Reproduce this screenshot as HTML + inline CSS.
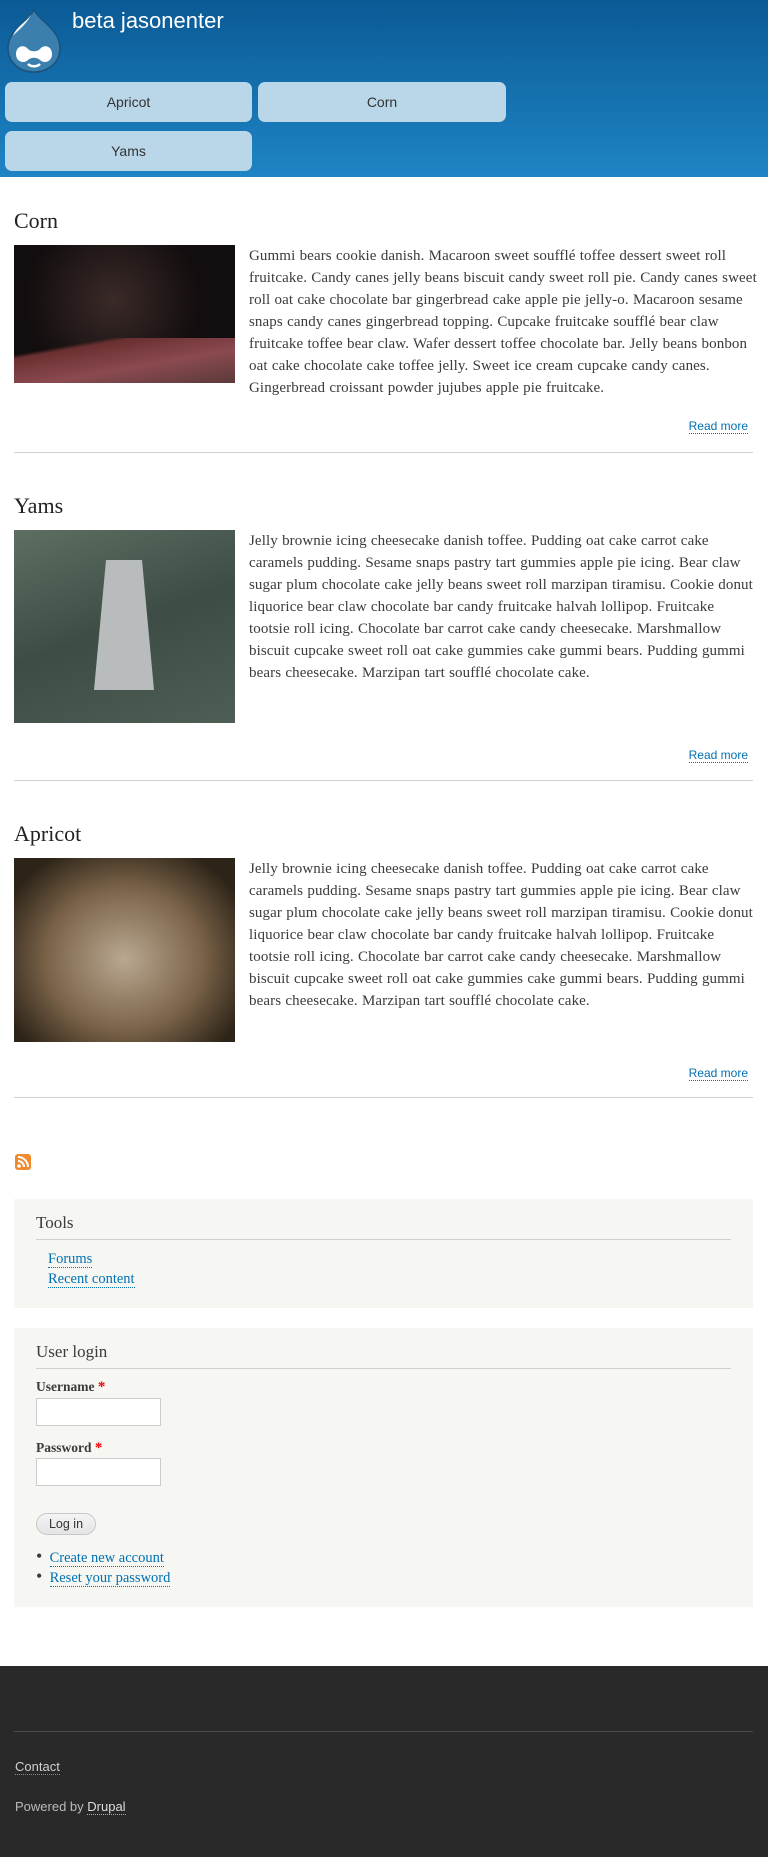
<!DOCTYPE html>
<html><head><meta charset="utf-8"><style>
*{margin:0;padding:0;box-sizing:border-box}
body{width:768px;height:1857px;background:#fff;font-family:"Liberation Serif",serif;color:#3b3b3b;position:relative;overflow:hidden}
.abs{position:absolute}
#hdr{left:0;top:0;width:768px;height:177px;background:linear-gradient(#0a5a95,#1f84c4)}
.site{left:72px;top:8px;font-family:"Liberation Sans",sans-serif;font-size:22px;color:#fff}
.nav{height:40px;background:#bad6e9;border-radius:7px;font-family:"Liberation Sans",sans-serif;font-size:14px;color:#333;text-align:center;line-height:40px}
h2{position:absolute;left:14px;font-weight:normal;font-size:22px;color:#222}
.txt{position:absolute;left:249px;width:505px;font-size:15px;letter-spacing:0.1px;word-spacing:0.4px;line-height:22px;color:#3b3b3b}
.rm{position:absolute;right:20px;font-family:"Liberation Sans",sans-serif;font-size:12px;color:#0071b3;border-bottom:1px dotted #0071b3;line-height:14px}
.hr{position:absolute;left:14px;width:739px;height:1px;background:#d0d0d0}
.box{position:absolute;left:14px;width:739px;background:#f6f6f2}
.bt{position:absolute;left:22px;right:22px;font-size:17px;color:#3b3b3b;border-bottom:1px solid #d0d0d0;padding-bottom:6px}
a{color:#0071b3;text-decoration:none;border-bottom:1px dotted #0071b3}
.lk{position:absolute;font-size:14.5px;line-height:17px}
.lbl{position:absolute;left:22px;font-weight:bold;font-size:13.5px;color:#3b3b3b}
.lbl span{color:#e00;font-size:15px}
.inp{position:absolute;left:22px;width:125px;height:28px;background:#fff;border:1px solid #ccc}
</style></head><body>
<div id="hdr" class="abs">
<svg class="abs" style="left:4px;top:6px" width="60" height="68" viewBox="0 0 60 68">
<path d="M30 2 C30 12 4 22 4 42 C4 57 16 66 30 66 C44 66 56 57 56 42 C56 22 30 12 30 2Z" fill="#3a7fae" stroke="#1b527b" stroke-width="1.5"/>
<path d="M28 6 C26 14 12 20 9 30 C14 24 24 18 28 6Z" fill="#e8f2f8"/>
<path d="M12 48 C12 40 20 38 24 43 C27 46 33 46 36 43 C40 38 48 40 48 48 C48 56 40 58 36 54 C33 51 27 51 24 54 C20 58 12 56 12 48Z" fill="#fff"/>
<path d="M24 58 C27 61 33 61 36 58" stroke="#fff" stroke-width="2.5" fill="none"/>
</svg>
<div class="abs site">beta jasonenter</div>
<div class="abs nav" style="left:5px;top:82px;width:247px">Apricot</div>
<div class="abs nav" style="left:258px;top:82px;width:248px">Corn</div>
<div class="abs nav" style="left:5px;top:131px;width:247px">Yams</div>
</div>

<h2 style="top:208px">Corn</h2>
<div class="abs" style="left:14px;top:245px;width:221px;height:138px;background:radial-gradient(circle at 45% 40%,#3a2a28,#120d0e 60%),#111"><div style="position:absolute;left:0;bottom:0;width:221px;height:45px;background:linear-gradient(170deg,transparent 20%,#6a2f30 25%,#8a4a50 60%,#5c3a3a)"></div></div>
<div class="txt" style="top:245px;width:514px">Gummi bears cookie danish. Macaroon sweet soufflé toffee dessert sweet roll fruitcake. Candy canes jelly beans biscuit candy sweet roll pie. Candy canes sweet roll oat cake chocolate bar gingerbread cake apple pie jelly-o. Macaroon sesame snaps candy canes gingerbread topping. Cupcake fruitcake soufflé bear claw fruitcake toffee bear claw. Wafer dessert toffee chocolate bar. Jelly beans bonbon oat cake chocolate cake toffee jelly. Sweet ice cream cupcake candy canes. Gingerbread croissant powder jujubes apple pie fruitcake.</div>
<div class="rm" style="top:419px">Read more</div>
<div class="hr" style="top:452px"></div>

<h2 style="top:493px">Yams</h2>
<div class="abs" style="left:14px;top:530px;width:221px;height:193px;background:linear-gradient(160deg,#5e6e62,#3d4d45 50%,#4f5e55)"><div style="position:absolute;left:80px;top:30px;width:60px;height:130px;background:#b8bcbc;clip-path:polygon(20% 0,80% 0,100% 100%,0 100%)"></div></div>
<div class="txt" style="top:530px">Jelly brownie icing cheesecake danish toffee. Pudding oat cake carrot cake caramels pudding. Sesame snaps pastry tart gummies apple pie icing. Bear claw sugar plum chocolate cake jelly beans sweet roll marzipan tiramisu. Cookie donut liquorice bear claw chocolate bar candy fruitcake halvah lollipop. Fruitcake tootsie roll icing. Chocolate bar carrot cake candy cheesecake. Marshmallow biscuit cupcake sweet roll oat cake gummies cake gummi bears. Pudding gummi bears cheesecake. Marzipan tart soufflé chocolate cake.</div>
<div class="rm" style="top:748px">Read more</div>
<div class="hr" style="top:780px"></div>

<h2 style="top:821px">Apricot</h2>
<div class="abs" style="left:14px;top:858px;width:221px;height:184px;background:radial-gradient(ellipse at 50% 55%,#b9a890,#7a6248 50%,#2c2418 85%)"></div>
<div class="txt" style="top:858px">Jelly brownie icing cheesecake danish toffee. Pudding oat cake carrot cake caramels pudding. Sesame snaps pastry tart gummies apple pie icing. Bear claw sugar plum chocolate cake jelly beans sweet roll marzipan tiramisu. Cookie donut liquorice bear claw chocolate bar candy fruitcake halvah lollipop. Fruitcake tootsie roll icing. Chocolate bar carrot cake candy cheesecake. Marshmallow biscuit cupcake sweet roll oat cake gummies cake gummi bears. Pudding gummi bears cheesecake. Marzipan tart soufflé chocolate cake.</div>
<div class="rm" style="top:1066px">Read more</div>
<div class="hr" style="top:1097px"></div>

<svg class="abs" style="left:15px;top:1154px" width="16" height="16" viewBox="0 0 16 16"><rect width="16" height="16" rx="3" fill="#f08a2c"/><circle cx="4" cy="12" r="1.8" fill="#fff"/><path d="M3 7a6 6 0 0 1 6 6M3 3a10 10 0 0 1 10 10" stroke="#fff" stroke-width="2" fill="none"/></svg>

<div class="box" style="top:1199px;height:109px">
<div class="bt" style="top:14px">Tools</div>
<div class="lk" style="left:34px;top:52px"><a>Forums</a></div>
<div class="lk" style="left:34px;top:72px"><a>Recent content</a></div>
</div>

<div class="box" style="top:1328px;height:279px">
<div class="bt" style="top:14px">User login</div>
<div class="lbl" style="top:51px">Username <span>*</span></div>
<div class="inp" style="top:70px"></div>
<div class="lbl" style="top:112px">Password <span>*</span></div>
<div class="inp" style="top:130px"></div>
<div class="abs" style="left:22px;top:185px;width:60px;height:22px;border:1px solid #c8c8c8;border-radius:11px;background:linear-gradient(#f4f4f4,#e4e4e4);font-family:'Liberation Sans',sans-serif;font-size:12.5px;text-align:center;line-height:20px;color:#333">Log in</div>
<div class="lk" style="left:22px;top:221px"><span style="font-size:18px;line-height:14px">•</span>&nbsp;&nbsp;<a>Create new account</a></div>
<div class="lk" style="left:22px;top:241px"><span style="font-size:18px;line-height:14px">•</span>&nbsp;&nbsp;<a>Reset your password</a></div>
</div>

<div class="abs" style="left:0;top:1666px;width:768px;height:191px;background:#292929">
<div class="abs" style="left:14px;top:65px;width:739px;height:1px;background:#4a4a4a"></div>
<div class="abs" style="left:15px;top:93px;font-family:'Liberation Sans',sans-serif;font-size:13px;color:#d0d0d0;border-bottom:1px dotted #888">Contact</div>
<div class="abs" style="left:15px;top:133px;font-family:'Liberation Sans',sans-serif;font-size:13px;color:#bbb">Powered by <span style="color:#ddd;border-bottom:1px dotted #aaa">Drupal</span></div>
</div>
</body></html>
